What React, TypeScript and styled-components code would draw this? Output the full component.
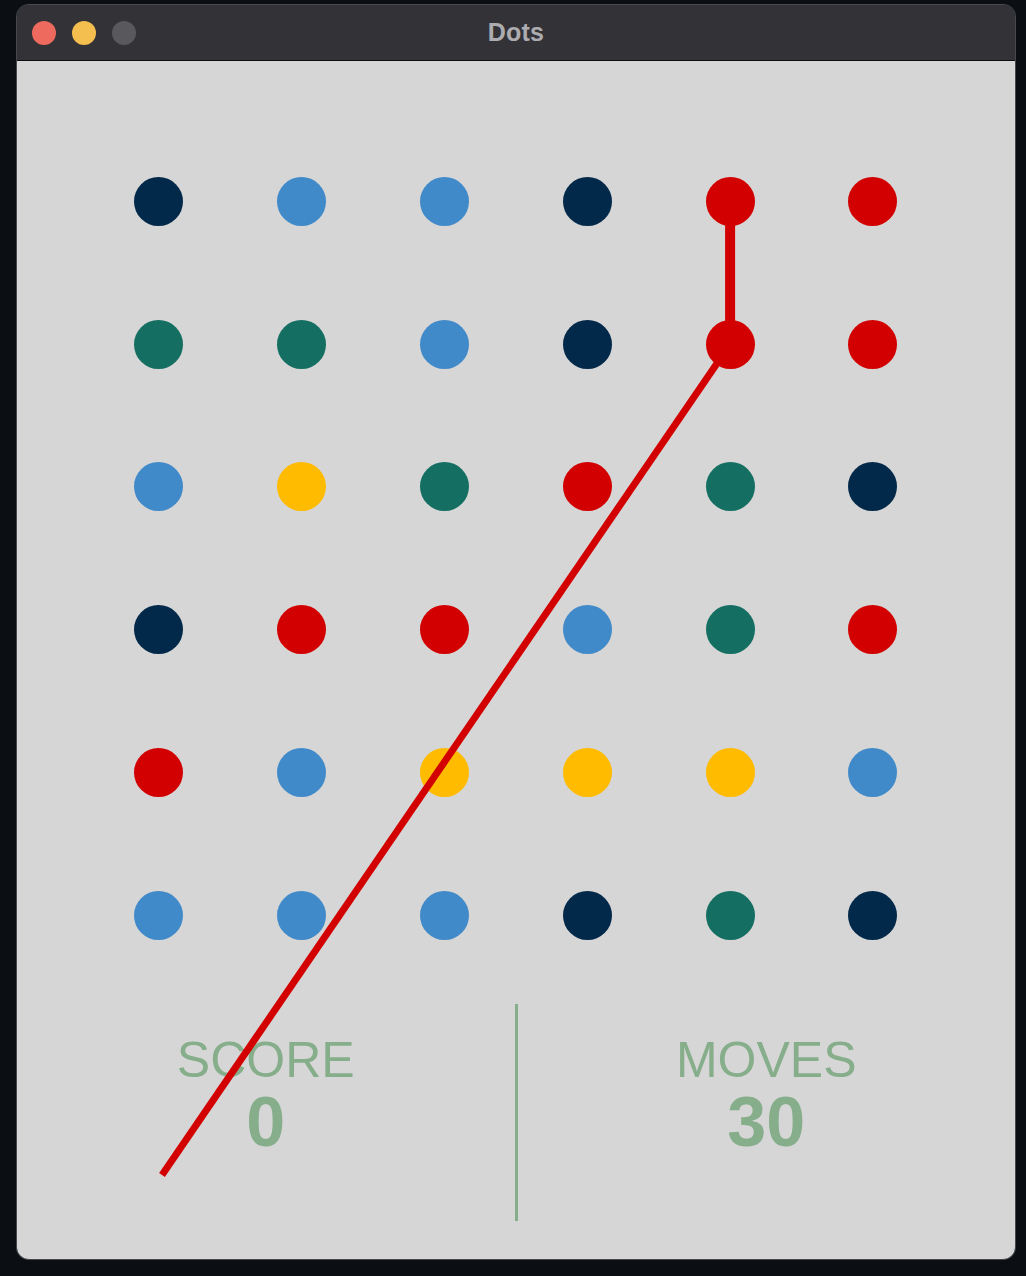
import React from 'react';
import styled, { createGlobalStyle } from 'styled-components';

const GlobalStyle = createGlobalStyle`
  html, body {
    margin: 0;
    padding: 0;
    background: #0b0f13;
  }
  body {
    font-family: "Liberation Sans", Arial, sans-serif;
  }
`;

const CELL = 142.8;
const BOARD_TOP = 69;
const BOARD_LEFT = 70.5;

const palette: Record<string, string> = {
  n: '#03294a',
  b: '#418ac9',
  t: '#146f62',
  r: '#d20000',
  y: '#ffbb00',
};

const board = [
  'nbbnrr',
  'ttbnrr',
  'bytrtn',
  'nrrbtr',
  'rbyyyb',
  'bbbntn',
];

// dots joined so far, then the loose end under the pointer
const chain = [
  [0, 4],
  [1, 4],
];
const pointer = { x: 145, y: 1114 };

const Desktop = styled.div`
  width: 1026px;
  height: 1276px;
  padding: 5px 11px 17px 17px;
  box-sizing: border-box;
`;

const Window = styled.div`
  width: 998px;
  height: 1254px;
  border-radius: 12px;
  overflow: hidden;
  display: flex;
  flex-direction: column;
  box-shadow: 0 0 0 1px rgba(120, 120, 126, 0.55);
`;

const TitleBar = styled.div`
  height: 55px;
  flex: none;
  display: grid;
  grid-template-columns: 1fr auto 1fr;
  align-items: center;
  background: #333237;
  border-bottom: 1px solid #0e0e10;
  padding: 0 15px;
`;

const Lights = styled.div`
  display: flex;
  gap: 16px;
`;

const Light = styled.span<{ $color: string }>`
  width: 24px;
  height: 24px;
  border-radius: 50%;
  background: ${(p) => p.$color};
`;

const Title = styled.div`
  font-family: "Liberation Sans", Arial, sans-serif;
  font-weight: bold;
  font-size: 25px;
  color: #adacb1;
  letter-spacing: 0.2px;
`;

const Content = styled.div`
  position: relative;
  flex: 1;
  background: #d6d6d6;
  padding-top: ${BOARD_TOP}px;
  box-sizing: border-box;
`;

const Board = styled.div`
  width: ${CELL * 6}px;
  height: ${CELL * 6}px;
  margin: 0 auto;
  display: grid;
  grid-template-columns: repeat(6, 1fr);
  grid-template-rows: repeat(6, 1fr);
`;

const Cell = styled.div`
  display: flex;
  align-items: center;
  justify-content: center;
`;

const Dot = styled.span<{ $color: string }>`
  width: 49px;
  height: 49px;
  border-radius: 50%;
  background: ${(p) => p.$color};
`;

const Stats = styled.div`
  margin-top: 17px;
  height: 217px;
  display: grid;
  grid-template-columns: 1fr 3px 1fr;
`;

const Stat = styled.div`
  display: flex;
  flex-direction: column;
  align-items: center;
  padding-top: 31px;
  color: #86ae8b;
`;

const Label = styled.div`
  font-size: 50px;
  line-height: 50px;
`;

const Value = styled.div`
  font-size: 70px;
  line-height: 70px;
  font-weight: bold;
  margin-top: 2px;
`;

const Divider = styled.div`
  background: #86ae8b;
`;

const Overlay = styled.svg`
  position: absolute;
  left: 0;
  top: 0;
  width: 100%;
  height: 100%;
  pointer-events: none;
  overflow: visible;
`;

const center = (row: number, col: number) => ({
  x: BOARD_LEFT + (col + 0.5) * CELL,
  y: BOARD_TOP + (row + 0.5) * CELL,
});

const App = () => {
  const pts = chain.map(([r, c]) => center(r, c));
  const last = pts[pts.length - 1];
  return (
    <>
      <GlobalStyle />
      <Desktop>
        <Window>
          <TitleBar>
            <Lights>
              <Light $color="#ee6a5e" />
              <Light $color="#f5bf4f" />
              <Light $color="#59585d" />
            </Lights>
            <Title>Dots</Title>
            <span />
          </TitleBar>
          <Content>
            <Board>
              {board.map((row, r) =>
                row.split('').map((k, c) => (
                  <Cell key={`${r}-${c}`}>
                    <Dot $color={palette[k]} />
                  </Cell>
                ))
              )}
            </Board>
            <Stats>
              <Stat>
                <Label>SCORE</Label>
                <Value>0</Value>
              </Stat>
              <Divider />
              <Stat>
                <Label>MOVES</Label>
                <Value>30</Value>
              </Stat>
            </Stats>
            <Overlay>
              {pts.slice(1).map((p, i) => (
                <line
                  key={i}
                  x1={pts[i].x}
                  y1={pts[i].y}
                  x2={p.x}
                  y2={p.y}
                  stroke="#d20000"
                  strokeWidth={10}
                />
              ))}
              <line
                x1={last.x}
                y1={last.y}
                x2={pointer.x}
                y2={pointer.y}
                stroke="#d20000"
                strokeWidth={7}
              />
            </Overlay>
          </Content>
        </Window>
      </Desktop>
    </>
  );
};

export default App;
